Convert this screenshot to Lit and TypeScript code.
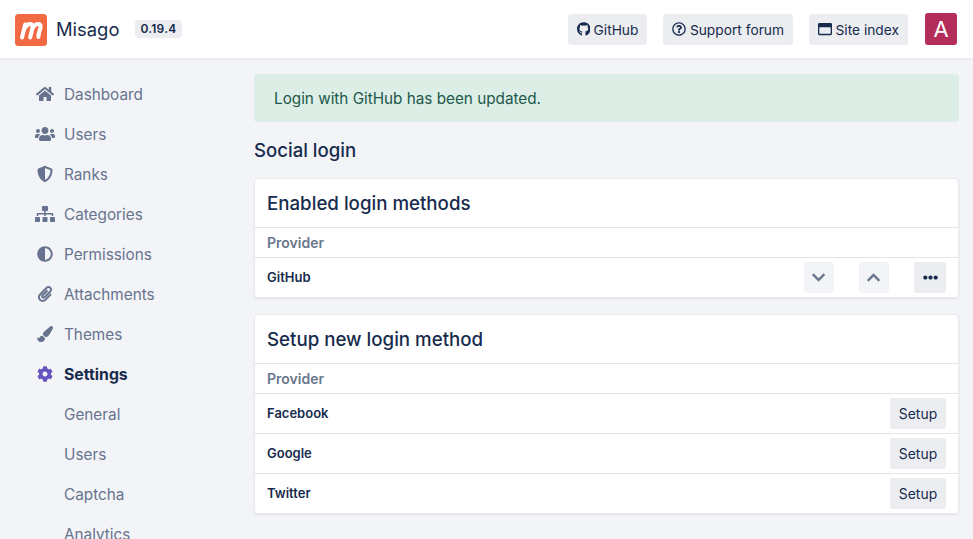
import { LitElement, html, css, svg } from "lit";
import { customElement } from "lit/decorators.js";

const I: Record<string, [number, string]> = {
  home: [576, "M280.37 148.26L96 300.11V464a16 16 0 0 0 16 16l112.06-.29a16 16 0 0 0 15.92-16V368a16 16 0 0 1 16-16h64a16 16 0 0 1 16 16v95.64a16 16 0 0 0 16 16.05L464 480a16 16 0 0 0 16-16V300L295.67 148.26a12.19 12.19 0 0 0-15.3 0zM571.6 251.47L488 182.56V44.05a12 12 0 0 0-12-12h-56a12 12 0 0 0-12 12v72.61L318.47 43a48 48 0 0 0-61 0L4.34 251.47a12 12 0 0 0-1.6 16.9l25.5 31A12 12 0 0 0 45.15 301l235.22-193.74a12.19 12.19 0 0 1 15.3 0L530.9 301a12 12 0 0 0 16.9-1.6l25.5-31a12 12 0 0 0-1.7-16.93z"],
  users: [640, "M96 224c35.3 0 64-28.7 64-64s-28.7-64-64-64-64 28.7-64 64 28.7 64 64 64zm448 0c35.3 0 64-28.7 64-64s-28.7-64-64-64-64 28.7-64 64 28.7 64 64 64zm32 32h-64c-17.6 0-33.5 7.1-45.1 18.6 40.3 22.1 68.9 62 75.1 109.4h66c17.7 0 32-14.3 32-32v-32c0-35.3-28.7-64-64-64zm-256 0c61.9 0 112-50.1 112-112S381.9 32 320 32 208 82.1 208 144s50.1 112 112 112zm76.8 32h-8.3c-20.8 10-43.9 16-68.5 16s-47.6-6-68.5-16h-8.3C179.6 288 128 339.6 128 403.2V432c0 26.5 21.5 48 48 48h288c26.5 0 48-21.5 48-48v-28.8c0-63.6-51.6-115.2-115.2-115.2zm-223.7-13.4C161.5 263.1 145.6 256 128 256H64c-35.3 0-64 28.7-64 64v32c0 17.7 14.3 32 32 32h65.9c6.3-47.4 34.9-87.3 75.2-109.4z"],
  shield: [512, "M466.5 83.7l-192-80a48.15 48.15 0 0 0-36.9 0l-192 80C27.7 91.1 16 108.6 16 128c0 198.5 114.5 335.7 221.5 380.3 11.8 4.9 25.1 4.9 36.9 0C360.1 472.6 496 349.3 496 128c0-19.4-11.7-36.9-29.5-44.3zM256.1 446.3l-.1-381 175.9 73.3c-3.3 151.4-82.1 261.1-175.8 307.7z"],
  sitemap: [640, "M128 352H32c-17.67 0-32 14.33-32 32v96c0 17.67 14.33 32 32 32h96c17.67 0 32-14.33 32-32v-96c0-17.67-14.33-32-32-32zm-24-80h192v48h48v-48h192v48h48v-57.59c0-21.17-17.23-38.41-38.41-38.41H344v-64h40c17.67 0 32-14.33 32-32V32c0-17.67-14.33-32-32-32H256c-17.67 0-32 14.33-32 32v96c0 17.67 14.33 32 32 32h40v64H94.41C73.23 224 56 241.23 56 262.41V320h48v-48zm264 80h-96c-17.67 0-32 14.33-32 32v96c0 17.67 14.33 32 32 32h96c17.67 0 32-14.33 32-32v-96c0-17.67-14.33-32-32-32zm240 0h-96c-17.67 0-32 14.33-32 32v96c0 17.67 14.33 32 32 32h96c17.67 0 32-14.33 32-32v-96c0-17.67-14.33-32-32-32z"],
  adjust: [512, "M8 256c0 136.966 111.033 248 248 248s248-111.034 248-248S392.966 8 256 8 8 119.033 8 256zm248 184V72c101.705 0 184 82.311 184 184 0 101.705-82.311 184-184 184z"],
  clip: [448, "M43.246 466.142c-58.43-60.289-57.341-157.511 1.386-217.581L254.392 34c44.316-45.332 116.351-45.336 160.671 0 43.89 44.894 43.943 117.329 0 162.276L232.214 383.128c-29.855 30.537-78.633 30.111-107.982-.998-28.275-29.97-27.368-77.473 1.452-106.953l143.743-146.835c6.182-6.314 16.312-6.422 22.626-.241l22.861 22.379c6.315 6.182 6.422 16.312.241 22.626L171.427 319.927c-4.932 5.045-5.236 13.428-.648 18.292 4.372 4.634 11.245 4.711 15.688.165l182.849-186.851c19.613-20.062 19.613-52.725-.011-72.798-19.189-19.627-49.957-19.637-69.154 0L90.39 293.295c-34.763 35.56-35.299 93.12-1.191 128.313 34.01 35.093 88.985 35.137 123.058.286l172.06-175.999c6.177-6.319 16.307-6.433 22.626-.256l22.877 22.364c6.319 6.177 6.434 16.307.256 22.626l-172.06 175.998c-59.576 60.938-155.943 60.216-214.77-.485z"],
  brush: [512, "M167.02 309.34c-40.12 2.58-76.53 17.86-97.19 72.3-2.35 6.21-8 9.98-14.59 9.98-11.11 0-45.46-27.67-55.25-34.35C0 439.62 37.93 512 128 512c75.86 0 128-43.77 128-120.19 0-3.11-.65-6.08-.97-9.13l-88.01-73.34zM457.89 0c-15.16 0-29.37 6.71-40.21 16.45C213.27 199.05 192 203.34 192 257.09c0 13.7 3.25 26.76 8.73 38.7l63.82 53.18c7.21 1.8 14.64 3.03 22.39 3.03 62.11 0 98.11-45.47 211.16-256.46 7.38-14.35 13.9-29.85 13.9-45.99C512 20.64 486 0 457.89 0z"],
  cog: [512, "M487.4 315.7l-42.6-24.6c4.3-23.2 4.3-47 0-70.2l42.6-24.6c4.9-2.8 7.1-8.6 5.5-14-11.1-35.6-30-67.8-54.7-94.6-3.8-4.1-10-5.1-14.8-2.3L380.8 110c-17.9-15.4-38.5-27.3-60.8-35.1V25.8c0-5.6-3.9-10.5-9.4-11.7-36.7-8.2-74.3-7.8-109.2 0-5.5 1.2-9.4 6.1-9.4 11.7V75c-22.2 7.9-42.8 19.8-60.8 35.1L88.7 85.5c-4.9-2.8-11-1.9-14.8 2.3-24.7 26.7-43.6 58.9-54.7 94.6-1.7 5.4.6 11.2 5.5 14L67.3 221c-4.3 23.2-4.3 47 0 70.2l-42.6 24.6c-4.9 2.8-7.1 8.6-5.5 14 11.1 35.6 30 67.8 54.7 94.6 3.8 4.1 10 5.1 14.8 2.3l42.6-24.6c17.9 15.4 38.5 27.3 60.8 35.1v49.2c0 5.6 3.9 10.5 9.4 11.7 36.7 8.2 74.3 7.8 109.2 0 5.5-1.2 9.4-6.1 9.4-11.7v-49.2c22.2-7.9 42.8-19.8 60.8-35.1l42.6 24.6c4.9 2.8 11 1.9 14.8-2.3 24.7-26.7 43.6-58.9 54.7-94.6 1.5-5.5-.7-11.3-5.6-14.1zM256 336c-44.1 0-80-35.9-80-80s35.9-80 80-80 80 35.9 80 80-35.9 80-80 80z"],
  github: [496, "M165.9 397.4c0 2-2.3 3.6-5.2 3.6-3.3.3-5.6-1.3-5.6-3.6 0-2 2.3-3.6 5.2-3.6 3-.3 5.6 1.3 5.6 3.6zm-31.1-4.5c-.7 2 1.3 4.3 4.3 4.9 2.6 1 5.6 0 6.2-2s-1.3-4.3-4.3-5.2c-2.6-.7-5.5.3-6.2 2.3zm44.2-1.7c-2.9.7-4.9 2.6-4.6 4.9.3 2 2.9 3.3 5.9 2.6 2.9-.7 4.9-2.6 4.6-4.6-.3-1.9-3-3.2-5.9-2.9zM244.8 8C106.1 8 0 113.3 0 252c0 110.9 69.8 205.8 169.5 239.2 12.8 2.3 17.3-5.6 17.3-12.1 0-6.2-.3-40.4-.3-61.4 0 0-70 15-84.7-29.8 0 0-11.4-29.1-27.8-36.6 0 0-22.9-15.7 1.6-15.4 0 0 24.9 2 38.6 25.8 21.9 38.6 58.6 27.5 72.9 20.9 2.3-16 8.8-27.1 16-33.7-55.9-6.2-112.3-14.3-112.3-110.5 0-27.5 7.6-41.3 23.6-58.9-2.6-6.5-11.1-33.3 2.6-67.9 20.9-6.5 69 27 69 27 20-5.6 41.5-8.5 62.8-8.5s42.8 2.9 62.8 8.5c0 0 48.1-33.6 69-27 13.7 34.7 5.2 61.4 2.6 67.9 16 17.7 25.8 31.5 25.8 58.9 0 96.5-58.9 104.2-114.8 110.5 9.2 7.9 17 22.9 17 46.4 0 33.7-.3 75.4-.3 83.6 0 6.5 4.6 14.4 17.3 12.1C428.2 457.8 496 362.9 496 252 496 113.3 383.5 8 244.8 8z"],
  question: [512, "M256 8C119.043 8 8 119.083 8 256c0 136.997 111.043 248 248 248s248-111.003 248-248C504 119.083 392.957 8 256 8zm0 448c-110.532 0-200-89.431-200-200 0-110.495 89.472-200 200-200 110.491 0 200 89.471 200 200 0 110.53-89.431 200-200 200zm107.244-255.2c0 67.052-72.421 68.084-72.421 92.863V300c0 6.627-5.373 12-12 12h-45.647c-6.627 0-12-5.373-12-12v-8.659c0-35.745 27.1-50.034 47.579-61.516 17.561-9.845 28.324-16.541 28.324-29.579 0-17.246-21.999-28.693-39.784-28.693-23.189 0-33.894 10.977-48.942 29.969-4.057 5.12-11.46 6.071-16.666 2.124l-27.824-21.098c-5.107-3.872-6.251-11.066-2.644-16.363C184.846 131.491 214.94 112 261.794 112c49.071 0 101.45 38.304 101.45 88.8zM298 368c0 23.159-18.841 42-42 42s-42-18.841-42-42 18.841-42 42-42 42 18.841 42 42z"],
  window: [512, "M464 32H48C21.5 32 0 53.5 0 80v352c0 26.5 21.5 48 48 48h416c26.5 0 48-21.5 48-48V80c0-26.5-21.5-48-48-48zm0 394c0 3.3-2.7 6-6 6H54c-3.3 0-6-2.7-6-6V192h416v234z"],
  dots: [512, "M328 256c0 39.8-32.2 72-72 72s-72-32.2-72-72 32.2-72 72-72 72 32.2 72 72zm104-72c-39.8 0-72 32.2-72 72s32.2 72 72 72 72-32.2 72-72-32.2-72-72-72zm-352 0c-39.8 0-72 32.2-72 72s32.2 72 72 72 72-32.2 72-72-32.2-72-72-72z"],
  down: [448, "M207.029 381.476L12.686 187.132c-9.373-9.373-9.373-24.569 0-33.941l22.667-22.667c9.357-9.357 24.522-9.375 33.901-.04L224 284.505l154.745-154.021c9.379-9.335 24.544-9.317 33.901.04l22.667 22.667c9.373 9.373 9.373 24.569 0 33.941L240.971 381.476c-9.373 9.372-24.569 9.372-33.942 0z"],
  up: [448, "M240.971 130.524l194.343 194.343c9.373 9.373 9.373 24.569 0 33.941l-22.667 22.667c-9.357 9.357-24.522 9.375-33.901.04L224 227.495 69.255 381.516c-9.379 9.335-24.544 9.317-33.901-.04l-22.667-22.667c-9.373-9.373-9.373-24.569 0-33.941L207.03 130.525c9.372-9.373 24.568-9.373 33.941-.001z"],
};

const icon = (n: string, cls = "") => html`<svg class="ic ${cls}" viewBox="0 0 ${I[n][0]} 512" fill="currentColor">${svg`<path d=${I[n][1]}></path>`}</svg>`;

const NAV: [string, string, string][] = [
  ["home", "Dashboard", ""],
  ["users", "Users", ""],
  ["shield", "Ranks", ""],
  ["sitemap", "Categories", ""],
  ["adjust", "Permissions", ""],
  ["clip", "Attachments", ""],
  ["brush", "Themes", ""],
  ["cog", "Settings", "active"],
];
const SUB = ["General", "Users", "Captcha", "Analytics"];

@customElement("app-root")
export class AppRoot extends LitElement {
  static styles = css`
    :host {
      display: block;
      height: 539px;
      overflow: hidden;
      background: #f3f4f7;
      font-family: Inter, "Noto Sans", sans-serif;
      color: #172b4d;
      font-size: 15px;
    }
    .ic { display: block; height: 15px; flex: none; }
    .top {
      height: 58px;
      box-sizing: border-box;
      background: #fff;
      box-shadow: 0 1px 3px rgba(0, 0, 0, 0.07);
      display: flex;
      align-items: center;
      padding: 0 16px 0 15px;
      position: relative;
    }
    .logo { width: 32px; height: 32px; flex: none; display: block; margin-top: 1px; }
    .brand { font-size: 18.4px; font-weight: 400; margin-left: 9px; }
    .ver {
      margin-left: 16px;
      background: #ebedf1;
      border-radius: 4px;
      font-size: 12px;
      font-weight: 600;
      line-height: 18px;
      padding: 0 5px;
      letter-spacing: 0.25px;
    }
    .grow { flex: 1; }
    .tb {
      display: flex;
      align-items: center;
      gap: 3.5px;
      height: 31px;
      padding: 1px 9px 0;
      box-sizing: border-box;
      background: #ebedf1;
      border-radius: 3px;
      font-size: 13.75px;
      margin-right: 16px;
    }
    .tb .ic { height: 14px; margin-top: -1px; }
    .av {
      width: 32px;
      height: 32px;
      margin-left: 1px;
      background: #b32d5a;
      color: #fff;
      border-radius: 3px;
      font-size: 22px;
      display: flex;
      align-items: center;
      justify-content: center;
    }
    .main { display: flex; align-items: flex-start; padding: 16px 14px 0 0; }
    .side { width: 254px; flex: none; padding-left: 35px; box-sizing: border-box; }
    .item { display: flex; align-items: center; height: 40px; color: #67738e; font-size: 15.3px; }
    .item .slot { width: 20px; margin-right: 9px; flex: none; display: flex; justify-content: center; }
    .item .ic { height: 16px; }
    .item.active { color: #172b4d; font-weight: 700; font-size: 15.8px; }
    .item.active .ic { color: #6554c0; }
    .item.sub { padding-left: 29px; }
    .content { flex: 1; min-width: 0; }
    .alert {
      height: 48px;
      display: flex;
      align-items: center;
      padding: 0 20px;
      background: #dceee6;
      color: #22584a;
      border-radius: 3px;
      font-size: 15.27px;
    }
    h1 { font-size: 18.6px; font-weight: 500; margin: 0; line-height: 56px; }
    .card {
      background: #fff;
      border: 1px solid #e8eaee;
      border-radius: 4px;
      box-shadow: 0 1px 2px rgba(9, 30, 66, 0.08);
      margin-bottom: 16px;
    }
    .card h2 { margin: 0; height: 48px; box-sizing: border-box; padding: 0 12px; font-size: 18.7px; font-weight: 500; display: flex; align-items: center; }
    .row {
      display: flex;
      align-items: center;
      height: 40px;
      box-sizing: border-box;
      border-top: 1px solid #e2e4e9;
      padding: 0 12px;
      font-size: 13px;
      font-weight: 600;
    }
    .row.head { height: 30px; color: #6b778c; font-size: 14px; }
    .row span { flex: 1; padding-bottom: 2px; }
    .row.head span { padding-bottom: 0; }
    .act {
      width: 30px;
      height: 31px;
      background: #f3f4f7;
      border-radius: 3px;
      display: flex;
      align-items: center;
      justify-content: center;
      color: #6b778c;
      margin-left: 25px;
    }
    .act.on { background: #ebedf1; color: #172b4d; width: 32px; }
    .setup {
      height: 31px;
      width: 56px;
      justify-content: center;
      background: #ebedf1;
      border-radius: 3px;
      display: flex;
      align-items: center;
      font-size: 13.9px;
      font-weight: 400;
    }
  `;

  render() {
    return html`
      <header class="top">
        <svg class="logo" viewBox="0 0 32 32">
          <rect width="32" height="32" rx="3.5" fill="#f26a43"></rect>
          <path d="M7 23.5 L10.2 10.5 M10 14 C12 9.5 17.6 8.5 17.6 12.5 C17.6 15.5 15.6 20 15.2 23.5 M18 13.5 C20 9.5 26 8.5 25.6 12.5 C25.3 15.8 23.3 19 23.4 23" fill="none" stroke="#fff" stroke-width="4.1" stroke-linecap="round"></path>
        </svg>
        <div class="brand">Misago</div>
        <div class="ver">0.19.4</div>
        <div class="grow"></div>
        <div class="tb">${icon("github")}GitHub</div>
        <div class="tb">${icon("question")}Support forum</div>
        <div class="tb">${icon("window")}Site index</div>
        <div class="av">A</div>
      </header>
      <div class="main">
        <nav class="side">
          ${NAV.map(([i, t, c]) => html`<div class="item ${c}"><span class="slot">${icon(i)}</span>${t}</div>`)}
          ${SUB.map((t) => html`<div class="item sub">${t}</div>`)}
        </nav>
        <div class="content">
          <div class="alert">Login with GitHub has been updated.</div>
          <h1>Social login</h1>
          <section class="card">
            <h2>Enabled login methods</h2>
            <div class="row head"><span>Provider</span></div>
            <div class="row">
              <span>GitHub</span>
              <div class="act">${icon("down")}</div>
              <div class="act">${icon("up")}</div>
              <div class="act on">${icon("dots")}</div>
            </div>
          </section>
          <section class="card">
            <h2>Setup new login method</h2>
            <div class="row head"><span>Provider</span></div>
            ${["Facebook", "Google", "Twitter"].map((p) => html`<div class="row"><span>${p}</span><div class="setup">Setup</div></div>`)}
          </section>
        </div>
      </div>
    `;
  }
}
